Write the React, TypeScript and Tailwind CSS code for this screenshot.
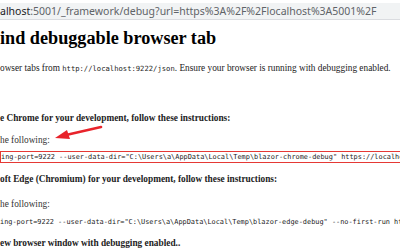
import React from "react";

export default function App() {
  const serif = { fontFamily: '"Liberation Serif", "Times New Roman", serif' };
  const mono = { fontFamily: '"DejaVu Sans Mono", "Liberation Mono", monospace' };
  return (
    <div className="w-[400px] h-[250px] overflow-hidden bg-white relative" style={serif}>
      <div className="h-[3px] bg-white" />
      <div className="h-[17px] bg-[#f1f3f4] border-b border-[#dadce0] flex items-center whitespace-nowrap text-[10.5px] leading-none" style={{ fontFamily: '"Noto Sans", "Open Sans", sans-serif' }}>
        <span className="text-[#202124]">alhost</span>
        <span className="text-[#5f6368]">:5001/_framework/debug?url=https%3A%2F%2Flocalhost%3A5001%2F</span>
      </div>
      <h1 className="mt-[8px] text-[18.2px] leading-[20px] font-bold text-black whitespace-nowrap">ind debuggable browser tab</h1>
      <p className="mt-[14px] text-[9.3px] leading-[12px] text-[#222] whitespace-nowrap">
        owser tabs from <span className="text-[7.2px]" style={mono}>http://localhost:9222/json</span>. Ensure your browser is running with debugging enabled.
      </p>
      <p className="mt-[37px] text-[9.3px] leading-[12px] font-bold text-[#222] whitespace-nowrap">e Chrome for your development, follow these instructions:</p>
      <p className="mt-[10px] text-[9.3px] leading-[12px] text-[#333] whitespace-nowrap">he following:</p>
      <div className="mt-[5px] w-[420px] h-[12px] border-[1.5px] border-[#e53935] flex items-center whitespace-nowrap text-[6.9px] text-[#222] overflow-hidden" style={mono}>
        ing-port=9222 --user-data-dir="C:\Users\a\AppData\Local\Temp\blazor-chrome-debug" https://localhost:5001/
      </div>
      <p className="mt-[10px] text-[9.3px] leading-[12px] font-bold text-[#222] whitespace-nowrap">oft Edge (Chromium) for your development, follow these instructions:</p>
      <p className="mt-[13px] text-[9.3px] leading-[12px] text-[#333] whitespace-nowrap">he following:</p>
      <div className="mt-[6px] h-[12px] flex items-center whitespace-nowrap text-[6.9px] text-[#222]" style={mono}>
        ing-port=9222 --user-data-dir="C:\Users\a\AppData\Local\Temp\blazor-edge-debug" --no-first-run https://localhost:5001/
      </div>
      <p className="mt-[9px] text-[9.3px] leading-[12px] font-bold text-[#222] whitespace-nowrap">ew browser window with debugging enabled..</p>
      <svg className="absolute left-0 top-0 pointer-events-none" width="400" height="250">
        <line x1="101" y1="127" x2="66" y2="135" stroke="#e8232b" strokeWidth="2.6" strokeLinecap="round" />
        <polygon points="55,138 67,130 70,139" fill="#e8232b" />
      </svg>
    </div>
  );
}
